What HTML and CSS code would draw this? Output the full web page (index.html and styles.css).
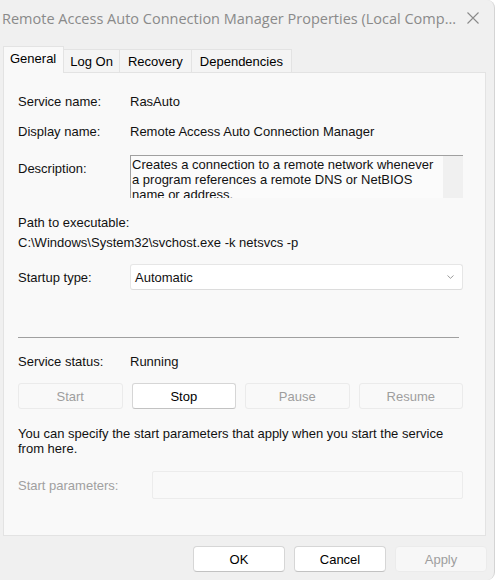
FILE: index.html
```html
<!DOCTYPE html>
<html>
<head>
<meta charset="utf-8">
<link rel="stylesheet" href="styles.css">
</head>
<body>
<div class="window">
  <div class="titlebar">
    <span class="title">Remote Access Auto Connection Manager Properties (Local Comp...</span>
    <svg class="close" width="12" height="12" viewBox="0 0 12 12"><path d="M0.5 0.5 L11.5 11.5 M11.5 0.5 L0.5 11.5" stroke="#8a8a8a" stroke-width="1.1" fill="none"/></svg>
  </div>
  <div class="tabs">
    <div class="tab selected">General</div>
    <div class="tab">Log On</div>
    <div class="tab tab-wide">Recovery</div>
    <div class="tab tab-wide">Dependencies</div>
  </div>
  <div class="panel">
    <div class="row r-name"><span class="label">Service name:</span><span>RasAuto</span></div>
    <div class="row r-display"><span class="label">Display name:</span><span>Remote Access Auto Connection Manager</span></div>
    <div class="row r-desc">
      <span class="label desc-label">Description:</span>
      <div class="desc-box">
        <div class="desc-text">Creates a connection to a remote network whenever a program references a remote DNS or NetBIOS name or address.</div>
        <div class="desc-scroll"></div>
      </div>
    </div>
    <div class="path-label">Path to executable:</div>
    <div class="path-value">C:\Windows\System32\svchost.exe -k netsvcs -p</div>
    <div class="row r-startup">
      <span class="label">Startup type:</span>
      <div class="combo">
        <span>Automatic</span>
        <svg class="chev" width="7" height="4" viewBox="0 0 7 4"><path d="M0.5 0.5 L3.5 3.3 L6.5 0.5" stroke="#909090" stroke-width="0.9" fill="none"/></svg>
      </div>
    </div>
    <div class="separator"></div>
    <div class="row r-status"><span class="label">Service status:</span><span>Running</span></div>
    <div class="svc-buttons">
      <div class="btn disabled">Start</div>
      <div class="btn">Stop</div>
      <div class="btn disabled">Pause</div>
      <div class="btn disabled">Resume</div>
    </div>
    <div class="para">You can specify the start parameters that apply when you start the service from here.</div>
    <div class="row r-params">
      <span class="label params-label">Start parameters:</span>
      <div class="params-input"></div>
    </div>
  </div>
  <div class="footer">
    <div class="btn fbtn">OK</div>
    <div class="btn fbtn">Cancel</div>
    <div class="btn fbtn disabled">Apply</div>
  </div>
</div>
</body>
</html>
```
FILE: styles.css
```css
html, body {
  margin: 0;
  padding: 0;
  background: #ffffff;
}
body {
  font-family: "Liberation Sans", Arial, sans-serif;
  font-size: 13px;
  color: #111;
}
.window {
  width: 495px;
  height: 580px;
  background: #f0f0f0;
  border-right: 1px solid #d4d4d4;
  border-top-right-radius: 8px;
  border-bottom-right-radius: 8px;
  box-sizing: border-box;
  display: flex;
  flex-direction: column;
  overflow: hidden;
}
.titlebar {
  height: 36px;
  display: flex;
  align-items: center;
  padding-left: 2px;
  padding-right: 15px;
}
.title {
  font-family: "Open Sans", "Noto Sans", sans-serif;
  font-size: 14.5px;
  color: #8a8a8a;
  flex: 1;
  white-space: nowrap;
  overflow: hidden;
}
.close {
  flex: none;
}
.tabs {
  margin-top: 10px;
  margin-left: 3px;
  height: 26px;
  display: flex;
  align-items: flex-end;
  position: relative;
  z-index: 1;
}
.tab {
  height: 23px;
  padding: 0 6px;
  display: flex;
  align-items: center;
  background: #f4f4f4;
  border: 1px solid #e3e3e3;
  border-bottom: none;
  border-left: none;
  box-sizing: border-box;
  color: #000;
}
.tab-wide {
  padding: 0 8px;
}
.tab.selected {
  height: 27px;
  margin-bottom: -1px;
  padding: 0 7px 3px 6px;
  background: #f9f9f9;
  border-left: 1px solid #e3e3e3;
}
.panel {
  margin-left: 3px;
  width: 483px;
  height: 464px;
  box-sizing: border-box;
  background: #f9f9f9;
  border: 1px solid #e3e3e3;
  padding: 19px 22px 0 14px;
  display: flex;
  flex-direction: column;
}
.row {
  display: flex;
  align-items: center;
}
.label {
  width: 112px;
  flex: none;
}
.r-name { height: 18px; }
.r-display { height: 18px; margin-top: 12px; }
.r-desc {
  margin-top: 15px;
  align-items: flex-start;
}
.desc-label { padding-top: 6px; line-height: 16px; }
.desc-box {
  width: 333px;
  height: 43px;
  box-sizing: border-box;
  border-top: 1px solid #a0a0a0;
  border-left: 1px solid #a0a0a0;
  background: #fbfbfb;
  display: flex;
  overflow: hidden;
}
.desc-text {
  flex: 1;
  padding: 1px 0 0 1px;
  line-height: 15px;
}
.desc-scroll {
  width: 20px;
  flex: none;
  background: #f0f0f0;
}
.path-label {
  margin-top: 15px;
  line-height: 20px;
}
.path-value {
  line-height: 20px;
}
.r-startup {
  margin-top: 11px;
  height: 26px;
}
.combo {
  width: 333px;
  height: 26px;
  box-sizing: border-box;
  background: #ffffff;
  border: 1px solid #e6e6e6;
  border-bottom-color: #dcdcdc;
  border-radius: 3px;
  display: flex;
  align-items: center;
  justify-content: space-between;
  padding: 0 8px 0 4px;
}
.separator {
  margin-top: 47px;
  height: 1px;
  width: 441px;
  background: #a0a0a0;
}
.r-status {
  margin-top: 15px;
  height: 16px;
}
.svc-buttons {
  margin-top: 14px;
  display: grid;
  grid-template-columns: repeat(4, 1fr);
  gap: 9px;
  width: 445px;
}
.btn {
  height: 26px;
  box-sizing: border-box;
  background: #ffffff;
  border: 1px solid #d6d6d6;
  border-bottom-color: #c2c2c2;
  border-radius: 3px;
  display: flex;
  align-items: center;
  justify-content: center;
  color: #000;
}
.btn.disabled {
  background: #f9f9f9;
  border: 1px solid #ebebeb;
  color: #9e9e9e;
}
.para {
  margin-top: 17px;
  line-height: 15px;
  width: 445px;
}
.r-params {
  margin-top: 15px;
  height: 28px;
}
.params-label {
  width: 134px;
  color: #a0a0a0;
}
.params-input {
  width: 311px;
  height: 28px;
  box-sizing: border-box;
  background: #f9f9f9;
  border: 1px solid #ececec;
  border-radius: 2px;
}
.footer {
  margin-top: 10px;
  display: flex;
  justify-content: flex-end;
  gap: 9px;
  padding-right: 7px;
}
.fbtn {
  width: 92px;
  border-radius: 4px;
}
.fbtn.disabled {
  background: #f7f7f7;
}
```
